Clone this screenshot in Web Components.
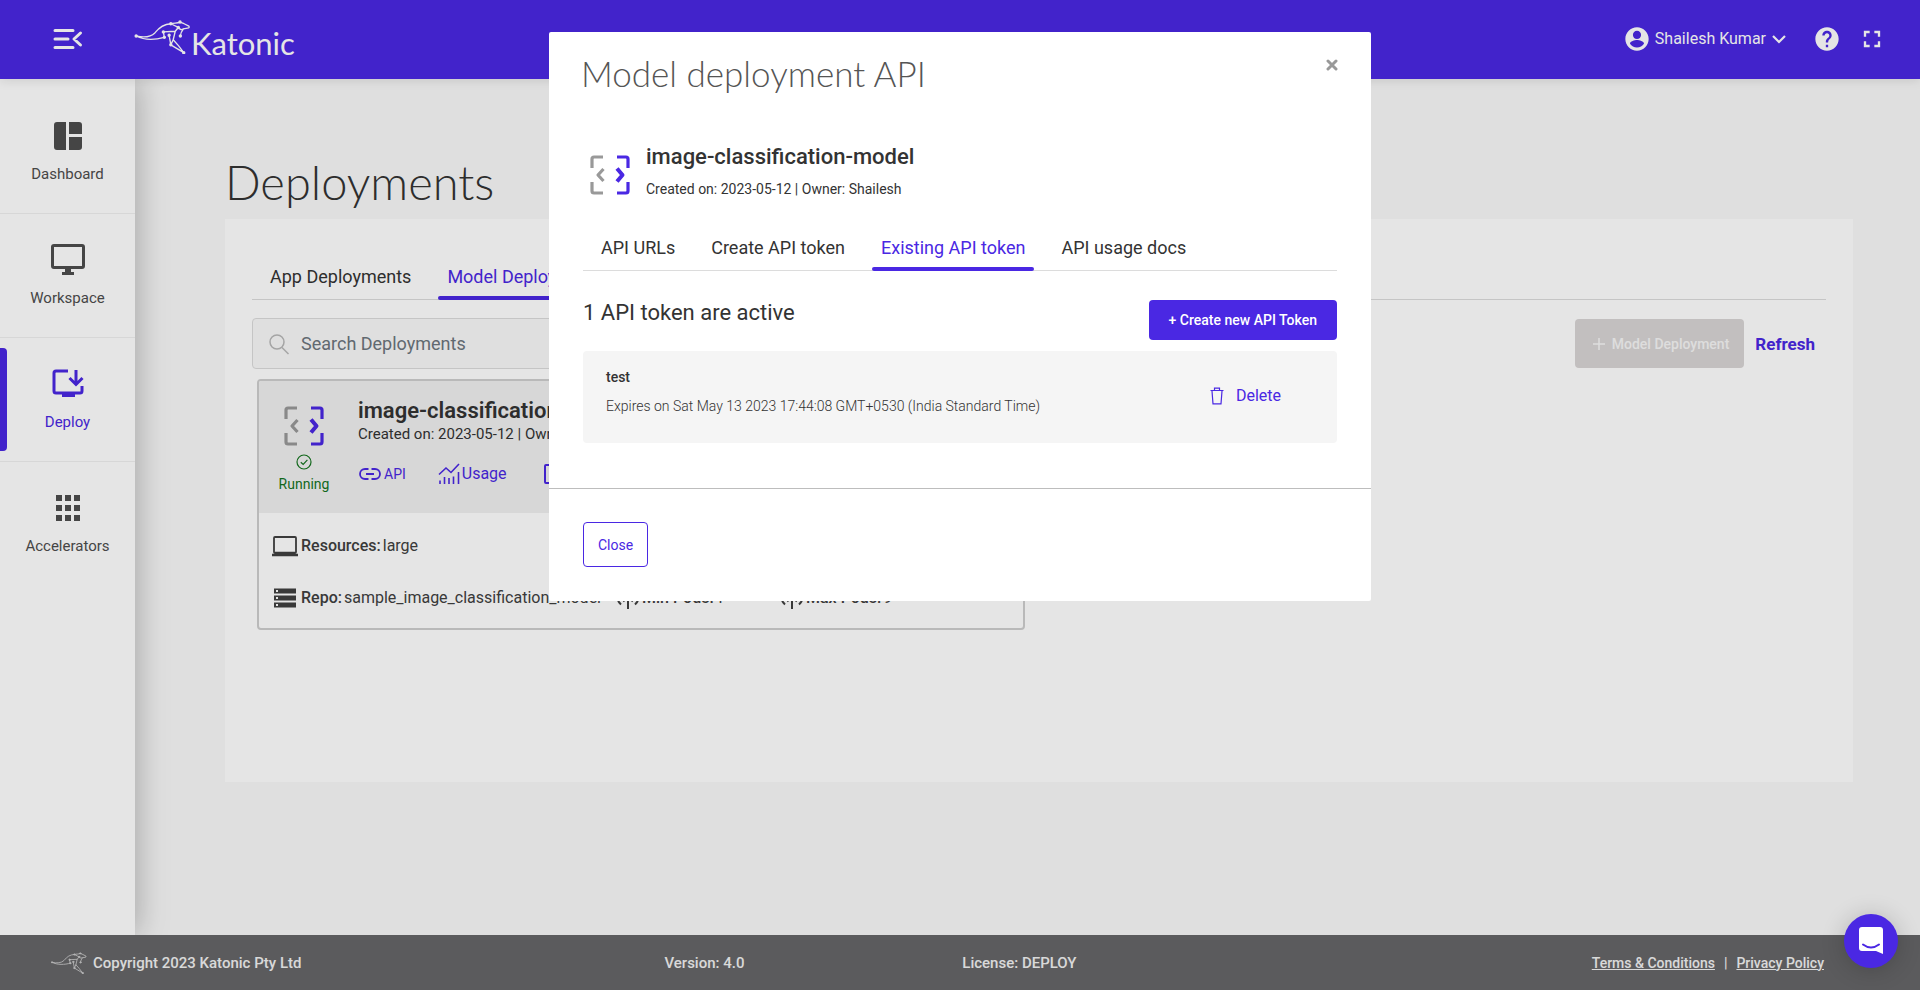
<!DOCTYPE html>
<html lang="en">
<head>
<meta charset="utf-8">
<meta name="viewport" content="width=device-width, initial-scale=1">
<title>Katonic - Deployments</title>
<style>
  :root {
    --brand: #4a28e3;
    --ink: #333333;
    --muted: #4d4d4d;
    --page: #f9f9f9;
  }
  html, body { margin: 0; min-height: 100%; }
  body { font-family: Roboto, "Liberation Sans", sans-serif; font-size: 16px; color: var(--ink); background: var(--page); }
</style>
</head>
<body>
<k-app>
  <k-header slot="header" user="Shailesh Kumar"></k-header>
  <k-sidebar slot="sidebar">
    <k-nav-item icon="dashboard">Dashboard</k-nav-item>
    <k-nav-item icon="workspace">Workspace</k-nav-item>
    <k-nav-item icon="deploy" active>Deploy</k-nav-item>
    <k-nav-item icon="grid">Accelerators</k-nav-item>
  </k-sidebar>
  <k-page heading="Deployments">
    <k-tabs>
      <k-tab>App Deployments</k-tab>
      <k-tab active>Model Deployments</k-tab>
    </k-tabs>
    <k-toolbar></k-toolbar>
    <k-deployment name="image-classification-model" created="2023-05-12" owner="Shailesh"></k-deployment>
  </k-page>
  <k-footer slot="footer"></k-footer>
</k-app>
<k-modal heading="Model deployment API">
  <k-model-title name="image-classification-model">Created on: 2023-05-12 | Owner: Shailesh</k-model-title>
  <k-tabs>
    <k-tab>API URLs</k-tab>
    <k-tab>Create API token</k-tab>
    <k-tab active>Existing API token</k-tab>
    <k-tab>API usage docs</k-tab>
  </k-tabs>
  <k-token-list heading="1 API token are active">
    <k-token name="test">Expires on Sat May 13 2023 17:44:08 GMT+0530 (India Standard Time)</k-token>
  </k-token-list>
</k-modal>
<k-chat></k-chat>

<script>
const ICONS = {
  menu: '<svg width="30" height="22" viewBox="0 0 30 22" fill="none" stroke="currentColor" stroke-width="3" stroke-linecap="round" stroke-linejoin="round"><path d="M2 2.500h18M2 11h13M2 19.500h18M27.500 5l-6.500 6 6.500 6"/></svg>',
  dashboard: '<svg width="36" height="36" viewBox="0 0 36 36" fill="currentColor"><path d="M7 4h9v28H7q-3 0-3-3V7q0-3 3-3zM19 4h10q3 0 3 3v9H19zM19 19h13v10q0 3-3 3H19z"/></svg>',
  workspace: '<svg width="36" height="36" viewBox="0 0 36 36" fill="currentColor"><path fill-rule="evenodd" d="M4 2h28q3 0 3 3v19q0 3-3 3H21v3h3v3H12v-3h3v-3H4q-3 0-3-3V5q0-3 3-3zm0 3v19h28V5z"/></svg>',
  deploy: '<svg width="36" height="36" viewBox="0 0 36 36" fill="none" stroke="currentColor" stroke-width="3"><path d="M18 5H6q-2 0-2 2v18q0 2 2 2h24q2 0 2-2v-5"/><path d="M12 29h13" stroke-width="4"/><path d="M26 4v14M19.500 12l6.500 6.500L32.500 12"/></svg>',
  grid: '<svg width="36" height="36" viewBox="0 0 36 36" fill="currentColor"><path d="M6 5h6v6H6zM15 5h6v6h-6zM24 5h6v6h-6zM6 15h6v6H6zM15 15h6v6h-6zM24 15h6v6h-6zM6 25h6v6H6zM15 25h6v6h-6zM24 25h6v6h-6z"/></svg>',
  user: '<svg width="28" height="28" viewBox="0 0 24 24" fill="currentColor"><path d="M12 2C6.480 2 2 6.480 2 12s4.480 10 10 10 10-4.480 10-10S17.520 2 12 2zm0 3c1.930 0 3.500 1.570 3.500 3.500S13.930 12 12 12s-3.500-1.570-3.500-3.500S10.070 5 12 5zm0 14.200c-2.500 0-4.710-1.280-6-3.220.030-1.990 4-3.080 6-3.080 1.990 0 5.970 1.090 6 3.080-1.290 1.940-3.500 3.220-6 3.220z"/></svg>',
  chevron: '<svg width="14" height="10" viewBox="0 0 14 10" fill="none" stroke="currentColor" stroke-width="2.200"><path d="M1 2l6 6 6-6"/></svg>',
  help: '<svg width="28" height="28" viewBox="0 0 24 24" fill="currentColor"><path d="M12 2C6.480 2 2 6.480 2 12s4.480 10 10 10 10-4.480 10-10S17.520 2 12 2zm1 17h-2v-2h2v2zm2.070-7.750l-.9.920C13.450 12.900 13 13.500 13 15h-2v-.5c0-1.100.450-2.100 1.170-2.830l1.240-1.260c.370-.360.590-.860.590-1.410 0-1.100-.9-2-2-2s-2 .9-2 2H8c0-2.210 1.790-4 4-4s4 1.790 4 4c0 .880-.360 1.680-.930 2.250z"/></svg>',
  fullscreen: '<svg width="28" height="28" viewBox="0 0 24 24" fill="currentColor"><path d="M7 14H5v5h5v-2H7v-3zm-2-4h2V7h3V5H5v5zm12 7h-3v2h5v-5h-2v3zM14 5v2h3v3h2V5h-5z"/></svg>',
  search: '<svg width="20" height="22" viewBox="0 0 20 22" fill="none" stroke="currentColor" stroke-width="1.500"><circle cx="8" cy="9" r="7"/><path d="M13 14.500l6.500 6.500"/></svg>',
  plus: '<svg width="12" height="12" viewBox="0 0 12 12" fill="none" stroke="currentColor" stroke-width="1.500"><path d="M6 0v12M0 6h12"/></svg>',
  brackets: '<svg width="40" height="40" viewBox="0 0 40 40" fill="none" stroke-width="3.200" stroke-linejoin="round"><g stroke="#999"><path d="M13 2H4Q2 2 2 4v9M2 27v9q0 2 2 2h9"/><path d="M13.500 14L8 20l5.500 6"/></g><g stroke="#4a28e3"><path d="M27 2h9q2 0 2 2v9M38 27v9q0 2-2 2h-9"/><path d="M27 13.500l5.500 6.500-5.500 6.500" stroke-width="4"/></g></svg>',
  check: '<svg width="16" height="16" viewBox="0 0 16 16" fill="none" stroke="currentColor" stroke-width="1.200"><circle cx="8" cy="8" r="7"/><path d="M4.800 8.200l2.400 2.300 4.200-4.600"/></svg>',
  link: '<svg width="24" height="14" viewBox="0 0 24 14" fill="none" stroke="currentColor" stroke-width="1.800"><path d="M10.500 2H7a5 5 0 0 0 0 10h3.500M13.500 2H17a5 5 0 0 1 0 10h-3.500M8 7h8"/></svg>',
  usage: '<svg width="22" height="22" viewBox="0 0 22 22" fill="none" stroke="currentColor" stroke-width="1.600"><path d="M1 11.500L8 5l5 4.500L21 1M2 17.500V21M6.500 14v7M11 15v6M15.500 13.500V21M20.500 9v12"/></svg>',
  box: '<svg width="20" height="20" viewBox="0 0 20 20" fill="none" stroke="currentColor" stroke-width="2"><rect x="1" y="1" width="18" height="18" rx="1"/></svg>',
  laptop: '<svg width="28" height="22" viewBox="0 0 28 22" fill="none" stroke="currentColor" stroke-width="1.800"><rect x="3" y="2" width="22" height="16" rx="1"/><path d="M4 18h20M1 20h26" stroke-width="2.400"/></svg>',
  storage: '<svg width="28" height="22" viewBox="0 0 28 22" fill="currentColor"><path fill-rule="evenodd" d="M3 1.500h22v5H3zm2 1.500v2h2V3zM3 8.500h22v5H3zm2 1.500v2h2v-2zM3 15.500h22v5H3zm2 1.500v2h2v-2z"/></svg>',
  pods: '<svg width="24" height="24" viewBox="0 0 24 24" fill="none" stroke="currentColor" stroke-width="2"><path d="M12 11v12M5 18.500A10 10 0 0 1 5 3.500M19 3.500a10 10 0 0 1 0 15M8.500 15.500a6 6 0 0 1 0-9M15.500 6.500a6 6 0 0 1 0 9"/><circle cx="12" cy="11" r="1.500"/></svg>',
  trash: '<svg width="14" height="18" viewBox="0 0 14 18" fill="none" stroke="currentColor" stroke-width="1.200"><path d="M0.500 3.500h13M4.500 3.300V1.200h5v2.100M2 4l1 12.800h8L12 4"/></svg>',
  cross: '<svg width="12" height="12" viewBox="0 0 12 12" fill="none" stroke="currentColor" stroke-width="3" stroke-linecap="round"><path d="M2 2l8 8M10 2l-8 8"/></svg>',
  roo: '<svg viewBox="0 0 165 100" fill="none" stroke="currentColor" stroke-width="4" stroke-linejoin="round" stroke-linecap="round"><path d="M5 47C28 52 48 50 60 38C74 20 88 12 107 11L129 22M5 47C30 60 62 58 88 51M107 11C118 8 126 10 134 6L146 11 160 18Q163 24 156 24L144 26Q137 32 129 22M144 26Q136 36 135 47M85 35L120 33 129 22M85 35L88 51M102 45L107 73 145 96M120 33L114 58 130 76 145 96M107 73L114 58"/><g fill="currentColor"><circle cx="5" cy="47" r="3"/><circle cx="107" cy="11" r="3"/><circle cx="134" cy="6" r="3"/><circle cx="129" cy="22" r="3"/><circle cx="85" cy="35" r="3"/><circle cx="88" cy="51" r="3"/><circle cx="102" cy="45" r="3"/><circle cx="107" cy="73" r="3"/><circle cx="145" cy="96" r="3"/><circle cx="135" cy="47" r="3"/></g></svg>',
  chat: '<svg width="26" height="30" viewBox="0 0 26 30"><path fill="#fff" d="M4 1h18q3 0 3 3v24l-7-3H4q-3 0-3-3V4q0-3 3-3z"/><path d="M5 18.500q8 6 16 0" fill="none" stroke="#4a28e3" stroke-width="2" stroke-linecap="round"/></svg>'
};

const BASE = `<style>
  :host, * { box-sizing: border-box; }
  svg { display: block; flex: none; }
  button { font: inherit; color: inherit; background: none; border: 0; padding: 0; margin: 0; cursor: pointer; }
  h1, h2, h3, p { margin: 0; }
  a { color: inherit; }
</style>`;

function define(tag, render) {
  customElements.define(tag, class extends HTMLElement {
    constructor() {
      super();
      this.attachShadow({ mode: 'open' });
    }
    connectedCallback() {
      this.shadowRoot.innerHTML = BASE + render(name => this.getAttribute(name) || '');
    }
  });
}

define('k-app', () => `<style>
  :host { display: grid; grid-template: auto 1fr auto / 135px minmax(0, 1fr); min-height: 100vh; }
  .top, .bottom { grid-column: 1 / -1; }
  .top { position: relative; z-index: 2; box-shadow: 0 2px 10px rgba(0,0,0,.1); }
  .side { background: #fff; box-shadow: 2px 0 30px rgba(0,0,0,.26); clip-path: inset(0 -50px 0 0); }
</style>
<div class="top"><slot name="header"></slot></div>
<div class="side"><slot name="sidebar"></slot></div>
<main><slot></slot></main>
<div class="bottom"><slot name="footer"></slot></div>`);

define('k-header', attr => `<style>
  :host { display: block; background: var(--brand); color: #fff; }
  header { display: flex; align-items: center; height: 79px; padding: 0 34px 2px 53px; }
  .logo { display: flex; align-items: flex-start; margin-left: 51px; color: #fff; text-decoration: none; }
  .logo svg { width: 57px; height: 34px; margin-top: 3px; }
  .logo span { font: 400 31px/34px Lato, sans-serif; padding-top: 9px; }
  .user { display: flex; align-items: center; margin-left: auto; font-weight: 400; line-height: 20px; gap: 4px; }
  .user .caret { margin-left: 2px; }
  .help { margin: 0 17px 0 27px; }
</style>
<header>
  <button aria-label="Toggle menu">${ICONS.menu}</button>
  <a class="logo" href="#">${ICONS.roo}<span>Katonic</span></a>
  <button class="user">${ICONS.user}<span>${attr('user')}</span><span class="caret">${ICONS.chevron}</span></button>
  <button class="help" aria-label="Help">${ICONS.help}</button>
  <button aria-label="Full screen">${ICONS.fullscreen}</button>
</header>`);

define('k-sidebar', () => `<style>
  :host { display: block; padding-top: 11px; }
</style><nav><slot></slot></nav>`);

define('k-nav-item', attr => `<style>
  :host { display: block; height: 124px; border-bottom: 1px solid #f0f0f0; color: var(--muted); position: relative; }
  :host(:last-of-type) { border: 0; }
  :host([active]) { color: var(--brand); }
  :host([active])::before { content: ""; position: absolute; left: 0; top: 10px; bottom: 10px; width: 7px; border-radius: 0 4px 4px 0; background: var(--brand); }
  a { display: flex; flex-direction: column; align-items: center; gap: 10px; padding-top: 28px; font-size: 15px; line-height: 20px; text-decoration: none; }
</style><a href="#">${ICONS[attr('icon')]}<slot></slot></a>`);

define('k-page', attr => `<style>
  :host { display: block; padding: 71px 67px 0 90px; }
  h1 { font: 300 47px/64px Lato, sans-serif; }
  section { margin-top: 5px; min-height: 563px; padding: 37px 27px 36px; background: #fff; }
</style><h1>${attr('heading')}</h1><section><slot></slot></section>`);

define('k-tabs', () => `<style>
  :host { display: block; }
  div { display: flex; border-bottom: 1px solid #dcdcdc; }
</style><div role="tablist"><slot></slot></div>`);

define('k-tab', () => `<style>
  :host { display: block; margin-bottom: -1px; }
  button { position: relative; display: block; padding: 11px 18px 13px; font-size: 18px; line-height: 20px; }
  :host([active]) button { color: var(--brand); }
  :host([active]) button::after { content: ""; position: absolute; left: 9px; right: 9px; bottom: 0; height: 4px; border-radius: 2px; background: var(--brand); }
</style><button role="tab"><slot></slot></button>`);

define('k-toolbar', () => `<style>
  :host { display: flex; align-items: center; justify-content: space-between; margin: 18px 11px 0 0; }
  label { display: flex; align-items: center; gap: 12px; width: 420px; height: 51px; padding: 0 16px; background: var(--page); border: 1px solid #dcdcdc; border-radius: 4px; color: #b8b8b8; }
  input { flex: 1; min-width: 0; border: 0; padding: 0; outline: 0; background: none; font: 400 18px/24px Roboto, sans-serif; }
  input::placeholder { color: #6c757d; opacity: 1; }
  .actions { display: flex; align-items: center; gap: 11px; }
  .new { display: flex; align-items: center; gap: 7px; height: 49px; padding: 0 15px 0 18px; border-radius: 4px; background: #d9d5d5; color: #f7f7f7; font-size: 14px; font-weight: 500; }
  .refresh { color: var(--brand); font-size: 17px; font-weight: 700; }
</style>
<label>${ICONS.search}<input type="text" placeholder="Search Deployments" aria-label="Search Deployments"></label>
<div class="actions"><button class="new" disabled>${ICONS.plus}Model Deployment</button><button class="refresh">Refresh</button></div>`);

define('k-deployment', attr => `<style>
  :host { display: block; width: 768px; max-width: 100%; margin: 10px 0 0 5px; border: 2px solid #cfcfcf; border-radius: 4px; overflow: hidden; }
  .head { display: flex; height: 132px; padding: 18px 20px 0 13px; background: #f0f0f0; }
  .state { display: flex; flex-direction: column; align-items: center; width: 64px; padding-top: 7px; margin-right: 22px; color: #15741f; font-size: 14px; line-height: 20px; }
  .state svg + svg { margin: 8px 0 4px; }
  h2 { font-size: 22px; line-height: 24px; font-weight: 600; }
  .meta { font-size: 15px; line-height: 22px; }
  .links { display: flex; align-items: center; gap: 32px; margin-top: 18px; color: var(--brand); }
  .links button { display: flex; align-items: center; gap: 2px; line-height: 22px; }
  .links .small { font-size: 14px; }
  .links .logs { margin-left: 5px; }
  .facts { display: grid; grid-template-columns: 345px 164px 1fr; row-gap: 28px; padding: 21px 12px 18px; color: #404040; }
  .facts p { display: flex; align-items: center; gap: 2px; line-height: 24px; white-space: nowrap; }
  .facts p:first-child { grid-column: 1 / -1; }
  b { font-weight: 500; }
</style>
<div class="head">
  <div class="state">${ICONS.brackets}${ICONS.check}<span>Running</span></div>
  <div>
    <h2>${attr('name')}</h2>
    <p class="meta">Created on: ${attr('created')} | Owner: ${attr('owner')}</p>
    <div class="links"><button class="small">${ICONS.link}API</button><button>${ICONS.usage}Usage</button><button class="logs" aria-label="Logs">${ICONS.box}</button></div>
  </div>
</div>
<div class="facts">
  <p>${ICONS.laptop}<b>Resources:</b><span>large</span></p>
  <p>${ICONS.storage}<b>Repo:</b><span>sample_image_classification_model</span></p>
  <p>${ICONS.pods}<b>Min Pods:</b><span>1</span></p>
  <p>${ICONS.pods}<b>Max Pods:</b><span>9</span></p>
</div>`);

define('k-footer', () => `<style>
  :host { display: block; background: #666668; color: #f2f2f2; }
  footer { display: grid; grid-template-columns: 34.600% 16.800% 1fr auto; align-items: center; height: 55px; padding: 0 96px 0 51px; font-size: 15px; font-weight: 500; line-height: 20px; }
  .copy { display: flex; align-items: center; gap: 6px; }
  .copy svg { width: 36px; height: 22px; opacity: .7; }
  .legal { display: flex; gap: 9px; font-size: 14px; }
</style>
<footer>
  <span class="copy">${ICONS.roo}Copyright 2023 Katonic Pty Ltd</span>
  <span>Version: 4.0</span>
  <span>License: DEPLOY</span>
  <span class="legal"><a href="#">Terms &amp; Conditions</a><span>|</span><a href="#">Privacy Policy</a></span>
</footer>`);

define('k-modal', attr => `<style>
  :host { position: fixed; inset: 0; z-index: 10; display: block; padding: 32px 16px; overflow: auto; background: rgba(0,0,0,.1); }
  .dialog { max-width: 822px; margin: 0 auto; background: #fff; border-radius: 2px; }
  .head { display: flex; justify-content: space-between; align-items: flex-start; padding: 19px 33px 0 32px; }
  h2 { font: 300 35px/44px Lato, sans-serif; color: #555; }
  .x { margin-top: 8px; color: #999; }
  .body { padding: 46px 34px 45px; }
  .foot { padding: 33px 34px 34px; border-top: 1px solid #bdbdbd; }
  .close { height: 45px; padding: 0 14px; border: 1px solid var(--brand); border-radius: 4px; color: var(--brand); font-size: 14px; }
</style>
<div class="dialog" role="dialog" aria-label="${attr('heading')}">
  <div class="head"><h2>${attr('heading')}</h2><button class="x" aria-label="Close dialog">${ICONS.cross}</button></div>
  <div class="body"><slot></slot></div>
  <div class="foot"><button class="close">Close</button></div>
</div>`);

define('k-model-title', attr => `<style>
  :host { display: flex; align-items: flex-end; gap: 16px; padding-left: 7px; margin-bottom: 28px; }
  svg { margin-bottom: 4px; }
  h3 { font-size: 22px; line-height: 32px; font-weight: 500; }
  p { margin-top: 6px; font-size: 14px; line-height: 20px; }
</style>${ICONS.brackets}<div><h3>${attr('name')}</h3><p><slot></slot></p></div>`);

define('k-token-list', attr => `<style>
  :host { display: block; margin-top: 29px; }
  .row { display: flex; justify-content: space-between; align-items: flex-start; margin-bottom: 11px; }
  h3 { font-size: 22px; line-height: 26px; font-weight: 400; }
  .create { height: 40px; padding: 0 20px; border-radius: 4px; background: var(--brand); color: #fff; font-size: 14px; font-weight: 500; }
</style><div class="row"><h3>${attr('heading')}</h3><button class="create">+ Create new API Token</button></div><slot></slot>`);

define('k-token', attr => `<style>
  :host { display: flex; justify-content: space-between; align-items: flex-start; height: 92px; padding: 16px 56px 0 23px; border-radius: 4px; background: #f5f5f5; }
  .name { font-size: 14px; font-weight: 500; line-height: 20px; }
  .when { margin-top: 9px; font-size: 14px; font-weight: 300; line-height: 20px; }
  button { display: flex; align-items: center; gap: 12px; margin-top: 19px; line-height: 20px; color: var(--brand); }
</style><div><p class="name">${attr('name')}</p><p class="when"><slot></slot></p></div><button>${ICONS.trash}Delete</button>`);

define('k-chat', () => `<style>
  :host { position: fixed; right: 22px; bottom: 22px; z-index: 20; }
  button { display: grid; place-items: center; width: 54px; height: 54px; border-radius: 50%; background: var(--brand); box-shadow: 0 2px 24px rgba(0,0,0,.2); }
</style><button aria-label="Open chat">${ICONS.chat}</button>`);
</script>
</body>
</html>
